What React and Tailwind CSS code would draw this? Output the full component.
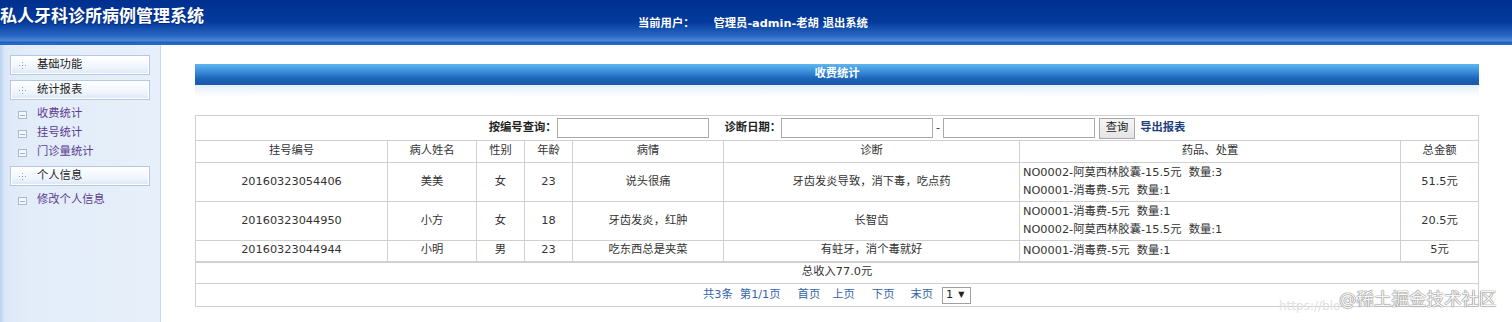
const rows = [
  {
    id: '20160323054406',
    name: '美美',
    sex: '女',
    age: '23',
    cond: '说头很痛',
    diag: '牙齿发炎导致，消下毒，吃点药',
    drugs: ['NO0002-阿莫西林胶囊-15.5元  数量:3', 'NO0001-消毒费-5元  数量:1'],
    total: '51.5元',
  },
  {
    id: '20160323044950',
    name: '小方',
    sex: '女',
    age: '18',
    cond: '牙齿发炎，红肿',
    diag: '长智齿',
    drugs: ['NO0001-消毒费-5元  数量:1', 'NO0002-阿莫西林胶囊-15.5元  数量:1'],
    total: '20.5元',
  },
  {
    id: '20160323044944',
    name: '小明',
    sex: '男',
    age: '23',
    cond: '吃东西总是夹菜',
    diag: '有蛀牙，消个毒就好',
    drugs: ['NO0001-消毒费-5元  数量:1'],
    total: '5元',
  },
];

const menu = [
  { title: '基础功能', items: [] },
  { title: '统计报表', items: ['收费统计', '挂号统计', '门诊量统计'] },
  { title: '个人信息', items: ['修改个人信息'] },
];

function PlusDot() {
  return (
    <svg width="7" height="7" viewBox="0 0 7 7" className="shrink-0">
      <rect x="3" y="0" width="1" height="1" fill="#8aa2c4" />
      <rect x="3" y="6" width="1" height="1" fill="#8aa2c4" />
      <rect x="0" y="3" width="1" height="1" fill="#8aa2c4" />
      <rect x="6" y="3" width="1" height="1" fill="#8aa2c4" />
      <rect x="3" y="3" width="1" height="1" fill="#6f88ad" />
    </svg>
  );
}

function SubIcon() {
  return (
    <svg width="9" height="8" viewBox="0 0 9 8" className="shrink-0">
      <rect x="0.5" y="0.5" width="8" height="7" fill="#f4f8fd" stroke="#a7b9d3" />
      <rect x="2" y="4" width="5" height="1" fill="#9fb2cc" />
    </svg>
  );
}

function Sidebar() {
  return (
    <div className="w-[161px] shrink-0 border-r border-[#c8d8ee] bg-[linear-gradient(90deg,#b9d3f2_0px,#dde9f8_5px,#e3edf9_30px,#e6effa_100%)] pt-[10px]">
      {menu.map((m) => (
        <div key={m.title}>
          <div className="mx-[10px] mb-[5px] flex h-[20px] items-center border border-[#b3c9e6] bg-[linear-gradient(#ffffff,#f1f6fc_60%,#dbe7f6)] pl-[8px] shadow-[inset_0_0_0_1px_#ffffff]">
            <PlusDot />
            <span className="ml-[11px] text-[#222]">{m.title}</span>
          </div>
          {m.items.length > 0 && (
            <div className="mb-[4px] mt-[3px] flex flex-col">
              {m.items.map((it) => (
                <div key={it} className="flex h-[19px] items-center pl-[18px]">
                  <SubIcon />
                  <span className="ml-[10px] text-[#5b3d8f]">{it}</span>
                </div>
              ))}
            </div>
          )}
        </div>
      ))}
    </div>
  );
}

const td = 'border border-[#d0d0d0] text-center align-middle';

export default function App() {
  return (
    <div className="relative h-[322px] w-[1512px] overflow-hidden bg-white font-['DejaVu_Sans','Noto_Sans_CJK_SC',sans-serif] text-[11.3px] text-[#333]">
      <div className="relative flex h-[45px] bg-[linear-gradient(#00308f_0px,#033a9c_22px,#2a68c4_36px,#4c8ad8_41px,#1f5dbd_42px,#2a6cc8_45px)]">
        <div className="pt-[5px] text-[17px] font-bold leading-[22px] text-white [text-shadow:0_1px_1px_rgba(0,0,40,0.4)]">
          私人牙科诊所病例管理系统
        </div>
        <div className="absolute left-[638px] top-[16px] flex font-bold leading-[16px] text-white">
          <span>当前用户：</span>
          <span className="ml-[19px]">管理员-admin-老胡 退出系统</span>
        </div>
      </div>

      <div className="flex h-[277px]">
        <Sidebar />
        <div className="flex-1 px-[34px] pt-[19px]">
          <div className="flex h-[21px] items-center justify-center bg-[linear-gradient(#5fb6ee,#3c8fdb_35%,#1c64b9_70%,#1a58a8)] font-bold text-white">
            收费统计
          </div>
          <div className="h-[12px] bg-[linear-gradient(#e3effb,#ffffff)]" />

          <table className="mt-[18px] w-full table-fixed border-collapse border border-[#cccccc]">
            <colgroup>
              <col className="w-[192px]" />
              <col className="w-[89px]" />
              <col className="w-[48px]" />
              <col className="w-[48px]" />
              <col className="w-[151px]" />
              <col className="w-[296px]" />
              <col className="w-[381px]" />
              <col className="w-[78px]" />
            </colgroup>
            <tbody>
              <tr className="h-[25px]">
                <td colSpan={8} className="border border-[#d0d0d0]">
                  <div className="flex items-center justify-center">
                    <span className="font-bold text-[#222]">按编号查询：</span>
                    <div className="h-[20px] w-[152px] border border-[#a9a9a9] bg-white" />
                    <span className="ml-[16px] font-bold text-[#222]">诊断日期：</span>
                    <div className="h-[20px] w-[152px] border border-[#a9a9a9] bg-white" />
                    <span className="mx-[3px]">-</span>
                    <div className="h-[20px] w-[152px] border border-[#a9a9a9] bg-white" />
                    <div className="ml-[4px] flex h-[21px] w-[36px] items-center justify-center border border-[#a8a8a8] bg-[linear-gradient(#f6f6f6,#e4e4e4)] text-[#222]">
                      查询
                    </div>
                    <span className="ml-[5px] font-bold text-[#1d3f7c]">导出报表</span>
                  </div>
                </td>
              </tr>
              <tr className="h-[22px]">
                {['挂号编号', '病人姓名', '性别', '年龄', '病情', '诊断', '药品、处置', '总金额'].map((h) => (
                  <td key={h} className={td}>
                    {h}
                  </td>
                ))}
              </tr>
              {rows.map((r) => (
                <tr key={r.id} className={r.drugs.length > 1 ? 'h-[39px]' : 'h-[21px]'}>
                  <td className={td}>{r.id}</td>
                  <td className={td}>{r.name}</td>
                  <td className={td}>{r.sex}</td>
                  <td className={td}>{r.age}</td>
                  <td className={td}>{r.cond}</td>
                  <td className={td}>{r.diag}</td>
                  <td className="border border-[#d0d0d0] pl-[3px] text-left align-middle leading-[18px]">
                    {r.drugs.map((d) => (
                      <div key={d} className="whitespace-pre">
                        {d}
                      </div>
                    ))}
                  </td>
                  <td className={td}>{r.total}</td>
                </tr>
              ))}
              <tr className="h-[22px]">
                <td colSpan={8} className="border border-t-2 border-[#d0d0d0] text-center">
                  总收入77.0元
                </td>
              </tr>
              <tr className="h-[23px]">
                <td colSpan={8} className="border border-[#d0d0d0]">
                  <div className="flex items-center justify-center text-[#3465a8]">
                    <span>共3条</span>
                    <span className="ml-[7px]">第1/1页</span>
                    <span className="ml-[17px]">首页</span>
                    <span className="ml-[12px]">上页</span>
                    <span className="ml-[17px]">下页</span>
                    <span className="ml-[16px]">末页</span>
                    <div className="ml-[9px] flex h-[17px] w-[29px] items-center border border-[#a0a0a0] pl-[3px] text-[#222]">
                      <span>1</span>
                      <span className="ml-[5px] text-[8px]">▼</span>
                    </div>
                  </div>
                </td>
              </tr>
            </tbody>
          </table>
        </div>
      </div>

      <div className="absolute left-[1279px] top-[297px] text-[12px] text-[#e0e0e0]">https://blo</div>
      <div className="absolute left-[1339px] top-[288px] text-[17.5px] leading-[22px] text-[#f7f7f7] [text-shadow:0_0_1px_#808080,0_0_1px_#808080,0_0_1px_#808080]">
        @稀土掘金技术社区
      </div>
    </div>
  );
}
